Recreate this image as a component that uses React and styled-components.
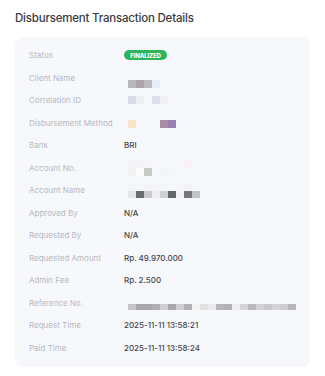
import React from 'react';
import styled, { createGlobalStyle } from 'styled-components';

const GlobalStyle = createGlobalStyle`
    body {
        margin: 0;
        background: #ffffff;
        font-family: 'Inter', 'Noto Sans', sans-serif;
    }
`;

const Page = styled.div`
    width: 325px;
    padding: 11px 15px 0 15px;
    box-sizing: border-box;
`;

const Title = styled.h2`
    margin: 0;
    font-size: 11.5px;
    line-height: 15px;
    font-weight: 500;
    color: #3a3b3e;
    letter-spacing: -0.2px;
`;

const Card = styled.div`
    margin-top: 11px;
    width: 295px;
    background: #f7f8fc;
    border-radius: 8px;
    padding: 7px 14px 8px 14px;
    box-sizing: border-box;
    display: grid;
    grid-template-columns: 95px 1fr;
    grid-auto-rows: 22.5px;
`;

const Label = styled.div`
    display: flex;
    align-items: center;
    font-size: 8px;
    color: #b6b9bf;
    white-space: nowrap;
`;

const Value = styled.div`
    display: flex;
    align-items: ${p => (p.$top !== undefined ? 'flex-start' : 'center')};
    font-size: 8px;
    font-weight: 500;
    color: #45464a;
    white-space: nowrap;
`;

const Badge = styled.span`
    display: inline-flex;
    align-items: center;
    justify-content: center;
    width: 43px;
    height: 10px;
    border-radius: 5px;
    background: #2db55d;
    color: #ffffff;
    font-size: 6px;
    font-weight: 800;
    letter-spacing: -0.1px;
`;

// blurred (pixelated) values
const MosaicGrid = styled.div`
    margin-left: 4px;
    margin-top: ${p => p.$top}px;
    display: grid;
    grid-template-columns: repeat(${p => p.$cols}, 8px);
    grid-auto-rows: ${p => p.$cell}px;
`;

const Cell = styled.span`
    background: ${p => p.$c || 'transparent'};
`;

const Mosaic = ({ rows, top, cell = 8 }) => {
    const cols = Math.max(...rows.map(r => r.length));
    return (
        <MosaicGrid $top={top} $cols={cols} $cell={cell}>
            {rows.map((r, i) =>
                Array.from({ length: cols }).map((_, j) => <Cell key={i + '-' + j} $c={r[j]} />)
            )}
        </MosaicGrid>
    );
};

const rows = [
    { label: 'Status', value: <Badge>FINALIZED</Badge> },
    { label: 'Client Name', top: 13.5, value: [['#b9b8bd', '#ada3a8', '#bcbbc0', '#e6eef8']] },
    { label: 'Correlation ID', top: 7, value: [['#d9dbe4', '#eeeef1', null, '#dde0e9', '#f1f1f4']] },
    { label: 'Disbursement Method', top: 8.5, value: [['#fbe3cc', null, null, null, '#a98ea5', '#9581b3']] },
    { label: 'Bank', value: 'BRI' },
    {
        label: 'Account No.', top: 3.5, value: [
            ['#f4f5f9', '#f4f4f8', '#f7f5f8', null, null, null, null, '#f8f2f5'],
            ['#f3f3f6', '#fbfbfb', '#c8cbc6', null, '#f3f4f8', '#f4f6f8'],
        ],
    },
    {
        label: 'Account Name', top: 5, value: [
            ['#f4f5f9', '#f6f7fa', '#f3f4f8', '#f5f6f9', '#f4f5f8', null, '#f5f6f9', '#f2f3f7', '#f5f6f9'],
            ['#e6e6ea', '#6b6d74', '#c9cacd', '#eeeef0', '#cfd0d3', '#66676c', '#f4f4f5', '#76777b', '#c3c4c7'],
        ], cell: 7,
    },
    { label: 'Approved By', value: 'N/A' },
    { label: 'Requested By', value: 'N/A' },
    { label: 'Requested Amount', value: 'Rp. 49.970.000' },
    { label: 'Admin Fee', value: 'Rp. 2.500' },
    {
        label: 'Reference No.', top: 12.5, cell: 6, value: [[
            '#c5c5c9', '#a8a8ac', '#a8a8ac', '#b0b0b4', '#d0d0d3', '#a9a9ad', '#cfcfd2', '#b3b3b7',
            '#f3f3f3', '#e2e2e4', '#ececee', '#b6b6ba', '#b3b3b7', '#eeeeef', '#d4d4d7', '#b9b9bd',
            '#d2d2d5', '#c9c9cc', '#d4d4d7', '#cdcdd0', '#b8b8bc',
        ]],
    },
    { label: 'Request Time', value: '2025-11-11 13:58:21' },
    { label: 'Paid Time', value: '2025-11-11 13:58:24' },
];

const App = () => (
    <Page>
        <GlobalStyle />
        <Title>Disbursement Transaction Details</Title>
        <Card>
            {rows.map(r => (
                <React.Fragment key={r.label}>
                    <Label>{r.label}</Label>
                    <Value $top={r.top}>
                        {Array.isArray(r.value)
                            ? <Mosaic rows={r.value} top={r.top} cell={r.cell} />
                            : r.value}
                    </Value>
                </React.Fragment>
            ))}
        </Card>
    </Page>
);

export default App;
